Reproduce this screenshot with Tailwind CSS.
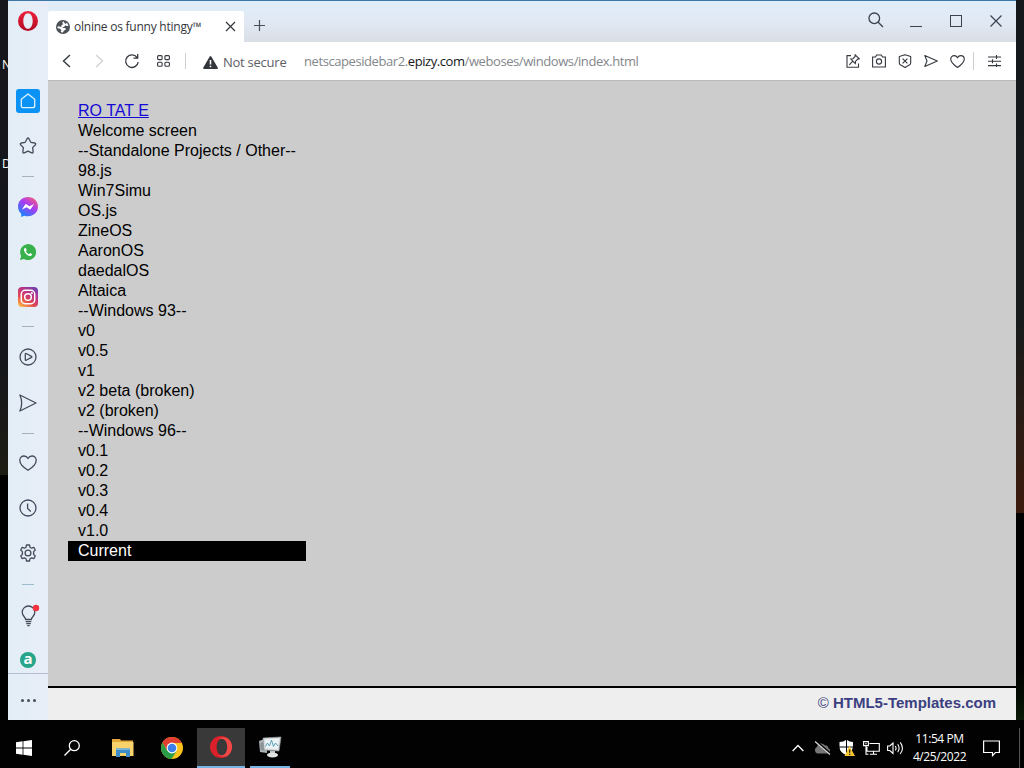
<!DOCTYPE html>
<html lang="en">
<head>
    <meta charset="UTF-8">
    <meta name="viewport" content="width=device-width, initial-scale=1.0">
    <script src="https://cdn.jsdelivr.net/npm/@tailwindcss/browser@4"></script>
    <title>olnine os funny htingy™</title>
</head>
<body class="w-[1024px] h-[768px] overflow-hidden bg-black flex flex-col font-['Open_Sans','Noto_Sans',sans-serif]">

    <div class="flex h-[720px]">
        <!-- desktop strip, left: icon labels run under the window -->
        <div class="w-2 shrink-0 bg-linear-to-b from-[#15171c] from-0% via-[#14171b] via-50% to-[#1c1b14] to-65% text-white text-[12px] leading-4">
            <div class="h-[475px] pt-[57px] pl-[2px]">
                <div>N</div>
                <div class="mt-[83px]">D</div>
            </div>
            <div class="h-[245px] bg-black"></div>
        </div>

        <!-- browser window -->
        <div class="relative w-[1008px] flex border-t border-[#3d76a5] bg-[#e5edf6]">

            <!-- sidebar -->
            <div class="w-10 shrink-0 flex flex-col items-center bg-linear-to-r from-[#e2eef6] to-[#e8edf8] text-[#464b5c]">
                <div class="h-[77px] pt-[10px]">
                    <svg width="20" height="20" viewBox="0 0 20 20">
                        <defs><linearGradient id="op" x1="0" y1="0" x2="0" y2="1"><stop offset="0" stop-color="#f0213c"/><stop offset="1" stop-color="#b00a24"/></linearGradient></defs>
                        <path fill="url(#op)" fill-rule="evenodd" d="M10 0a10 10 0 1 0 0 20a10 10 0 0 0 0-20zM10 2.200c2.800 0 4.700 3.500 4.700 7.800s-1.900 7.800-4.700 7.800s-4.700-3.500-4.700-7.800s1.900-7.800 4.700-7.800z"/>
                    </svg>
                </div>
                <div class="h-[45px] flex items-center">
                    <div class="size-6 rounded-[3px] bg-[#0a93f5] flex items-center justify-center">
                        <svg width="16" height="16" viewBox="0 0 16 16" fill="none" stroke="#dff3ff" stroke-width="1.300" stroke-linejoin="round"><path d="M1.300 6.300L8 1l6.700 5.300v6.400q0 2-2 2H3.300q-2 0-2-2z"/></svg>
                    </div>
                </div>
                <div class="h-[45px] flex items-center">
                    <svg width="18" height="18" viewBox="0 0 18 18" fill="none" stroke="currentColor" stroke-width="1.300" stroke-linejoin="round"><path d="M8.100 1.700q.9-1.400 1.800 0l1.900 3.600 4 .7q1.500.5.600 1.700l-2.800 2.900.6 4.200q0 1.500-1.400 1.100L9 14.100l-3.800 1.800q-1.400.4-1.400-1.100l.6-4.200-2.800-2.900Q.7 6.500 2.200 6l4-.7z"/></svg>
                </div>
                <div class="h-[16px] flex items-center"><div class="w-3 h-px bg-[#a9b0bb]"></div></div>
                <div class="h-[45px] flex items-center">
                    <svg width="20" height="20" viewBox="0 0 20 20">
                        <defs><linearGradient id="ms" x1="0.900" y1="0" x2="0.200" y2="1"><stop offset="0" stop-color="#ff5f6e"/><stop offset=".45" stop-color="#a83bf5"/><stop offset="1" stop-color="#0b8bff"/></linearGradient></defs>
                        <path fill="url(#ms)" d="M10 0C4.400 0 0 4 0 9.600c0 3 1.200 5.500 3.200 7.200V20l3-1.300c1.200.4 2.500.6 3.800.6c5.600 0 10-4.100 10-9.700S15.600 0 10 0z"/>
                        <path fill="#fff" d="M3.900 12.500l3.300-5q.8-.8 1.700-.1l2.400 1.800 4.800-2.300-3.300 5.100q-.8.8-1.700.1l-2.400-1.800z"/>
                    </svg>
                </div>
                <div class="h-[45px] flex items-center">
                    <svg width="16" height="16" viewBox="0 0 16 16"><path fill="#38b04c" d="M0 16l1.100-4.100A8 8 0 1 1 4.100 15z"/><path fill="#fff" d="M5.600 3.800c-1 .2-1.900 1.200-1.600 2.500c.6 2.800 3 5.200 5.600 5.800c1.200.2 2.400-.6 2.600-1.800l-2-1.200-1.100 1.100C7.600 9.600 6.500 8.500 5.900 7.200l.9-1z"/></svg>
                </div>
                <div class="h-[45px] flex items-center">
                    <svg width="20" height="20" viewBox="0 0 20 20" fill="none">
                        <defs><linearGradient id="ig" x1="0.150" y1="1" x2="0.800" y2="0"><stop offset="0" stop-color="#fdb94c"/><stop offset=".35" stop-color="#e0484d"/><stop offset=".65" stop-color="#c03382"/><stop offset="1" stop-color="#7040b0"/></linearGradient></defs>
                        <rect width="20" height="20" rx="4" fill="url(#ig)"/>
                        <g stroke="#fff" stroke-width="1.500"><rect x="3.300" y="3.300" width="13.400" height="13.400" rx="3.800"/><circle cx="10" cy="10" r="3.300"/></g><circle cx="13.900" cy="6" r="1" fill="#fff"/>
                    </svg>
                </div>
                <div class="h-[15px] flex items-center"><div class="w-3 h-px bg-[#a9b0bb]"></div></div>
                <div class="h-[46px] flex items-center">
                    <svg width="18" height="18" viewBox="0 0 18 18" fill="none" stroke="currentColor" stroke-width="1.300" stroke-linejoin="round"><circle cx="9" cy="9" r="8"/><path d="M6.300 6q0-.8.800-.5l5.400 2.800q.7.600 0 1.100l-5.400 2.900q-.8.300-.8-.5z"/></svg>
                </div>
                <div class="h-[46px] flex items-center">
                    <svg width="18" height="18" viewBox="0 0 18 18" fill="none" stroke="currentColor" stroke-width="1.300" stroke-linejoin="round"><path d="M.9 1L17 9 .9 17q3.600-8 0-16z"/></svg>
                </div>
                <div class="h-[14px] flex items-center"><div class="w-3 h-px bg-[#a9b0bb]"></div></div>
                <div class="h-[45px] flex items-center">
                    <svg width="18" height="18" viewBox="0 0 18 18" fill="none" stroke="currentColor" stroke-width="1.300" stroke-linejoin="round"><path d="M9 16.300C5.500 14 .8 10.700.8 6.400C.8 3.800 2.700 2 5 2c1.700 0 3.200 1 4 2.500C9.800 3 11.300 2 13 2c2.300 0 4.200 1.800 4.200 4.400c0 4.300-4.700 7.600-8.200 9.900z"/></svg>
                </div>
                <div class="h-[45px] flex items-center">
                    <svg width="18" height="18" viewBox="0 0 18 18" fill="none" stroke="currentColor" stroke-width="1.300"><circle cx="9" cy="9" r="8"/><path d="M8.600 4.500V9.500l3.200 3"/></svg>
                </div>
                <div class="h-[45px] flex items-center">
                    <svg width="18" height="18" viewBox="0 0 18 18" fill="none" stroke="currentColor" stroke-width="1.300" stroke-linejoin="round"><path d="M7.500 1h3l.5 2.300 1.500.9 2.300-.8 1.500 2.600-1.700 1.600v2.800l1.700 1.600-1.500 2.600-2.300-.8-1.500.9L10.500 17h-3L7 14.700l-1.500-.9-2.300.8L1.700 12l1.700-1.600V7.600L1.700 6l1.500-2.600 2.300.8L7 3.300z"/><circle cx="9" cy="9" r="2.900"/></svg>
                </div>
                <div class="h-[18px] flex items-center"><div class="w-3 h-px bg-[#9dbccf]"></div></div>
                <div class="h-[45px] flex items-center">
                    <svg class="ml-[3px]" width="22" height="24" viewBox="0 0 22 24" fill="none" stroke="currentColor" stroke-width="1.300"><path d="M6.700 15.500c0-2.100-3.500-3.300-3.500-7.200a6.300 6.300 0 0 1 12.600 0c0 3.900-3.500 5.100-3.500 7.200z"/><path d="M6.700 17.600h5.600M7.200 19.700h4.600M8.300 21.700h2.400"/><circle cx="17" cy="4" r="3.200" fill="#f5323f" stroke="none"/></svg>
                </div>
                <div class="h-[35px] pt-[14px]">
                    <div class="size-4 rounded-full bg-[#26a58a] text-white font-bold text-[15px] leading-[13px] text-center">a</div>
                </div>
                <div class="w-10 h-px bg-[#b6bdd0]"></div>
                <div class="flex gap-[3px] pt-[25px]">
                    <div class="size-[3px] rounded-full bg-[#464b5c]"></div>
                    <div class="size-[3px] rounded-full bg-[#464b5c]"></div>
                    <div class="size-[3px] rounded-full bg-[#464b5c]"></div>
                </div>
            </div>

            <div class="w-[968px] flex flex-col">
                <!-- tab strip -->
                <div class="h-[41px] flex bg-linear-to-b from-[#dfeefa] via-[#e1e8f3] via-55% to-[#d9dee5]">
                    <div class="w-[196px] h-[31px] mt-[10px] pl-2 flex items-center bg-white rounded-t-[2px]">
                        <svg width="14" height="14" viewBox="0 0 14 14"><circle cx="7" cy="7" r="7" fill="#4c5157"/><path fill="#fff" d="M7.500 1.300L6 3l1.500.9-2 1.300L5.200 7 2.600 6.200l-1.200.5.3 1.600 2.500.5 1.200 1.400-.7 1.600 2 .9 1.300-2.300 2-1-.8-1.500-3.200.2 2.200-1.400 1.400-1.400 1.700.9 1.200-.7L11 2.700 9.200 4z"/></svg>
                        <span class="ml-1 w-[146px] text-[12px] tracking-[-0.24px] text-[#33363c] whitespace-nowrap">olnine os funny htingy™</span>
                        <svg class="ml-[5px]" width="11" height="11" viewBox="0 0 11 11" stroke="#33363c" stroke-width="1.200"><path d="M1 1l9 9M10 1l-9 9"/></svg>
                    </div>
                    <svg class="ml-[10px] mt-[19px]" width="11" height="11" viewBox="0 0 11 11" stroke="#4a4e57" stroke-width="1.200"><path d="M5.500 0v11M0 5.500h11"/></svg>
                    <div class="ml-auto flex text-[#3c4150]">
                        <svg class="mt-[11px] mr-[26px]" width="16" height="16" viewBox="0 0 16 16" fill="none" stroke="currentColor" stroke-width="1.300"><circle cx="6.300" cy="6.300" r="5.300"/><path d="M10.200 10.200L15 15"/></svg>
                        <div class="w-3 h-px mt-[25px] mr-[28px] bg-[#3c4150]"></div>
                        <div class="size-3 mt-[14px] mr-[28px] border border-[#3c4150]"></div>
                        <svg class="mt-[14px] mr-[14px]" width="12" height="12" viewBox="0 0 12 12" stroke="currentColor" stroke-width="1.200"><path d="M.5.5l11 11M11.500.5l-11 11"/></svg>
                    </div>
                </div>

                <!-- address bar -->
                <div class="h-[38px] flex items-center bg-white text-[#34383f]">
                    <svg class="ml-[14px]" width="10" height="14" viewBox="0 0 10 14" fill="none" stroke="currentColor" stroke-width="1.400"><path d="M8 1L1.500 7 8 13"/></svg>
                    <svg class="ml-[22px]" width="10" height="14" viewBox="0 0 10 14" fill="none" stroke="#d0d2d4" stroke-width="1.400"><path d="M2 1l6.500 6L2 13"/></svg>
                    <svg class="ml-5" width="16" height="16" viewBox="0 0 16 16" fill="none" stroke="currentColor" stroke-width="1.300"><path d="M13.300 4.800A6.300 6.300 0 1 0 14.200 9M13.700 1v4.200H9.500"/></svg>
                    <svg class="ml-[17px]" width="13" height="12" viewBox="0 0 13 12" fill="none" stroke="currentColor" stroke-width="1.100"><rect x=".6" y=".6" width="4.500" height="4" rx="1"/><rect x="7.900" y=".6" width="4.500" height="4" rx="1"/><rect x=".6" y="7.300" width="4.500" height="4" rx="1"/><rect x="7.900" y="7.300" width="4.500" height="4" rx="1"/></svg>
                    <div class="ml-[15px] w-px h-4 bg-[#cfcfcf]"></div>
                    <svg class="ml-[17px] mt-[2px]" width="15" height="13" viewBox="0 0 15 13"><path fill="#33373b" d="M6.700.6q.8-1 1.600 0l6.500 11.100q.3 1.100-.8 1.300H1q-1.100-.2-.8-1.300z"/><path stroke="#fff" stroke-width="1.500" d="M7.500 4v4.500M7.500 9.800v1.500"/></svg>
                    <span class="ml-[5px] w-[81px] mt-[4px] text-[13px] tracking-[-0.25px] text-[#5c6066] whitespace-nowrap">Not secure</span>
                    <span class="mt-[2px] text-[13px] tracking-[-0.42px] text-[#84878b] whitespace-nowrap">netscapesidebar2.<span class="text-[#16181a]">epizy.com</span>/weboses/windows/index.html</span>
                    <div class="ml-auto mr-[15px] flex items-center">
                        <svg width="14" height="14" viewBox="0 0 14 14" fill="none" stroke="currentColor" stroke-width="1.100"><path d="M5 1.600H1v11.600h11.500V9.500"/><path d="M9.200.8l4 4-1.500.3-2.200 2.300-.2 2.200L4.700 5l2.200-.3 2.200-2.300zM6.800 7.200L3.300 10.800"/></svg>
                        <svg class="ml-[12px]" width="14" height="14" viewBox="0 0 14 14" fill="none" stroke="currentColor" stroke-width="1.100"><path d="M.6 3h3l1-2h4.800l1 2h3v10H.6z"/><circle cx="7" cy="7.500" r="2.600"/></svg>
                        <svg class="ml-[12px]" width="14" height="14" viewBox="0 0 14 14" fill="none" stroke="currentColor" stroke-width="1.100" stroke-linejoin="round"><path d="M7 .7l5.700 1.800v6.200q0 1.300-1 2.100L7 13.400 2.300 10.800q-1-.8-1-2.100V2.500z"/><path d="M4.600 4.600l4.800 4.800M9.400 4.600L4.600 9.400"/></svg>
                        <svg class="ml-[12px]" width="14" height="14" viewBox="0 0 14 14" fill="none" stroke="currentColor" stroke-width="1.100" stroke-linejoin="round"><path d="M.8 1.500L13.300 7 .8 12.500 3 7z"/></svg>
                        <svg class="ml-[12px]" width="15" height="14" viewBox="0 0 18 17" fill="none" stroke="currentColor" stroke-width="1.400" stroke-linejoin="round"><path d="M9 16.300C5.500 14 .8 10.700.8 6.400C.8 3.800 2.700 2 5 2c1.700 0 3.200 1 4 2.500C9.800 3 11.300 2 13 2c2.300 0 4.200 1.800 4.200 4.400c0 4.300-4.700 7.600-8.200 9.900z"/></svg>
                        <div class="ml-[8px] w-px h-[18px] bg-[#cfcfcf]"></div>
                        <svg class="ml-[14px]" width="13" height="12" viewBox="0 0 13 12" fill="none" stroke="currentColor" stroke-width="1.100"><path d="M0 2h13M0 6.300h13M0 10.600h13M8.500 0v4M4.500 4.300v4M8.500 8.600v3.400"/></svg>
                    </div>
                </div>

                <!-- page -->
                <div class="h-[606px] border-t border-[#b9babb] bg-[#ccc] pt-[20px] pl-5 font-['Liberation_Sans',Arial,sans-serif] text-[16px] leading-5 text-black">
                    <ul class="w-[238px] whitespace-nowrap [&>li]:h-5 [&>li]:pl-[10px]">
                        <li><a href="#" class="text-[#1409d6] underline">RO TAT E</a></li>
                        <li>Welcome screen</li>
                        <li>--Standalone Projects / Other--</li>
                        <li>98.js</li>
                        <li>Win7Simu</li>
                        <li>OS.js</li>
                        <li>ZineOS</li>
                        <li>AaronOS</li>
                        <li>daedalOS</li>
                        <li>Altaica</li>
                        <li>--Windows 93--</li>
                        <li>v0</li>
                        <li>v0.5</li>
                        <li>v1</li>
                        <li>v2 beta (broken)</li>
                        <li>v2 (broken)</li>
                        <li>--Windows 96--</li>
                        <li>v0.1</li>
                        <li>v0.2</li>
                        <li>v0.3</li>
                        <li>v0.4</li>
                        <li>v1.0</li>
                        <li class="bg-black text-white">Current</li>
                    </ul>
                </div>
                <div class="h-[34px] border-t-2 border-black bg-[#eee] pr-5 text-right font-['Liberation_Sans',Arial,sans-serif] text-[15px] leading-[30px] text-[#3b3f80]">
                    © <b>HTML5-Templates.com</b>
                </div>
            </div>
        </div>

        <!-- desktop strip, right -->
        <div class="w-2 shrink-0 bg-linear-to-b from-[#15181b] via-[#171b1b] via-45% to-[#3a1a0c] to-70%">
            <div class="h-[513px]"></div>
            <div class="h-[207px] bg-linear-to-b from-black from-60% to-[#0a1a08]"></div>
        </div>
    </div>

    <!-- taskbar -->
    <div class="h-12 flex bg-[#020202] text-white">
        <div class="w-12 flex items-center justify-center pt-2">
            <svg width="16" height="16" viewBox="0 0 16 16" fill="#fff"><path d="M0 2.200l6.600-.9v6.300H0zM7.400 1.200L16 0v7.600H7.400zM0 8.400h6.600v6.300L0 13.800zM7.400 8.400H16V16l-8.600-1.200z"/></svg>
        </div>
        <div class="w-12 flex items-center justify-center pt-2">
            <svg width="16" height="16" viewBox="0 0 16 16" fill="none" stroke="#fff" stroke-width="1.300"><circle cx="10.300" cy="5.700" r="5"/><path d="M6.700 9.300L.5 15.500"/></svg>
        </div>
        <div class="w-[53px] flex items-center justify-center pt-[6px]">
            <svg width="22" height="19" viewBox="0 0 22 19"><path fill="#e5a83b" d="M0 1h8l1 1.500h12V6H0z"/><path fill="#f8d36b" d="M0 4h21.500v14H0z"/><path fill="#3d8dc9" d="M4 10.500h14V19h-4v-4H8v4H4z"/><path fill="#72b6e4" d="M4 10.500h14v1.500H4z"/></svg>
        </div>
        <div class="w-12 flex items-center justify-center pt-2 -ml-px">
            <svg width="22" height="22" viewBox="0 0 22 22"><circle cx="11" cy="11" r="11" fill="#fbc21c"/><path fill="#e03f32" d="M1.500 5.500A11 11 0 0 1 20.800 6H11l-4.800 7.700z"/><path fill="#2a9d48" d="M1.500 5.500A11 11 0 0 0 10.500 22l5.200-8.300-4.700 2-4.800-2z"/><circle cx="11" cy="11" r="5.400" fill="#fff"/><circle cx="11" cy="11" r="4.300" fill="#3c7fea"/></svg>
        </div>
        <div class="w-12 mt-2 -mr-px h-10 ml-px flex items-center justify-center bg-[#393939] border-b-2 border-[#78b4e6]">
            <svg width="22" height="22" viewBox="0 0 20 20"><path fill="#dc2029" fill-rule="evenodd" d="M10 0a10 10 0 1 0 0 20a10 10 0 0 0 0-20zM11 2c2.600 0 4.700 3.500 4.700 8s-2.100 8-4.700 8s-5-3.500-5-8s2.400-8 5-8z"/><path fill="#f04a48" d="M7.500 3.300C9.500.3 14 .5 16.700 2.600a10 10 0 0 1 0 14.800C14 19.500 9.500 19.700 7.500 16.700c4.500 2.600 8.200-1 8.200-6.700S12 .7 7.500 3.300z"/></svg>
        </div>
        <div class="ml-[6px] w-10 mt-2 h-10 flex items-center justify-center border-b-2 border-[#78b4e6]">
            <svg width="24" height="22" viewBox="0 0 24 22"><path fill="#aeb4b8" d="M1 5l8-3v15l-7-1z"/><path fill="#8b9296" d="M2.500 6.500h4v8l-4-.5z"/><path fill="#d9dddf" stroke="#8b9296" stroke-width=".7" d="M5 2l18-1-2 14-15-1z"/><path fill="#edf3f5" d="M7 3.500l14-1-1.500 10.500-11.500-.7z"/><path fill="none" stroke="#4a9ab5" stroke-width=".9" d="M7.500 10.500l2-3.500 2 3 2-6 2 6.500 2-3.500 2.500 3"/><path fill="#c0c5c8" d="M12 15h5v3h-5z"/><ellipse cx="14.500" cy="19" rx="5.500" ry="2.500" fill="#e2e5e6"/></svg>
        </div>

        <div class="ml-auto flex items-center pt-2">
            <svg width="12" height="8" viewBox="0 0 12 8" fill="none" stroke="#fff" stroke-width="1.300"><path d="M.6 7L6 1.500 11.400 7"/></svg>
            <svg class="ml-[10px]" width="17" height="14" viewBox="0 0 17 14"><path fill="#777" d="M3.500 12.500A3.500 3.500 0 0 1 2.800 6a4.500 4.500 0 0 1 8-1.800q3.200 0 3.600 3a2.800 2.800 0 0 1-.4 5.300z"/><path stroke="#000" stroke-width="2.400" d="M1.500 0l15 13"/><path stroke="#ddd" stroke-width="1.200" d="M1 .5l15 13"/></svg>
            <svg class="ml-2" width="16" height="16" viewBox="0 0 16 16"><path fill="#fff" d="M7 0v6.500H.5V2Q4.500 2 7 0zM8 0q2.500 2 6 2v4.500H8zM.5 7.500H7V15Q.8 12 .5 7.500zM8 7.500h5.800Q13 12 8 15z"/><path fill="#f7c62f" d="M10.500 6L16 16H5.500z"/><path stroke="#222" stroke-width="1.200" d="M10.700 9.500v3.300M10.700 13.800V15"/></svg>
            <svg class="ml-[8px]" width="17" height="14" viewBox="0 0 17 14" fill="none" stroke="#fff" stroke-width="1.100"><path d="M6.500 2.500h9.800v7.700H4V6M7 13.200h7M10.500 10.200v3M.6.600h4.800v4H.6zM2.200 2.700h1.600M3 4.600v8.600h2.500"/></svg>
            <svg class="ml-[7px]" width="17" height="14" viewBox="0 0 17 14" fill="none" stroke="#fff" stroke-width="1.100"><path d="M.6 5v4.500h2.200L6 12.500V2L2.800 5zM8.300 5q1.500 2.200 0 4.500M10.700 3.200q2.800 4 0 8M13.200 1.400q4.500 5.800 0 11.600"/></svg>
            <div class="w-[71px] text-center text-[12px] leading-[18px] tracking-[-0.4px] whitespace-nowrap">
                <div>11:54 PM</div>
                <div>4/25/2022</div>
            </div>
            <svg class="ml-[8px] mr-[19px]" width="17" height="17" viewBox="0 0 17 17" fill="none" stroke="#fff" stroke-width="1.200"><path d="M.6 1h15.800v11.500h-4L9.500 15.600v-3.100H.6z"/></svg>
            <div class="mr-1 w-px h-10 bg-[#555]"></div>
        </div>
    </div>
</body>
</html>
